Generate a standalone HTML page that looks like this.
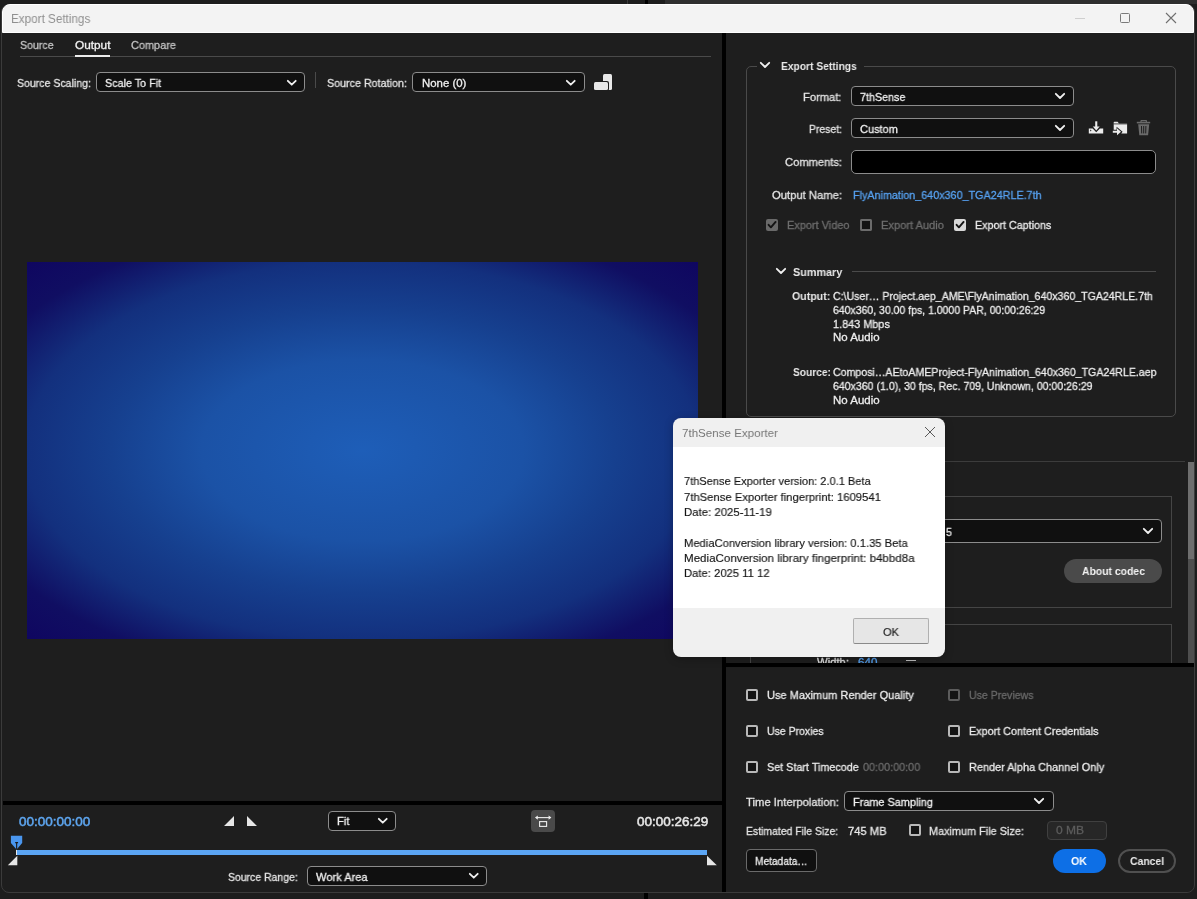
<!DOCTYPE html>
<html><head><meta charset="utf-8"><title>Export Settings</title>
<style>
html,body{margin:0;padding:0;width:1197px;height:899px;overflow:hidden;background:#1d1d1d}
body>*{position:absolute}
.t{font-family:"Liberation Sans", sans-serif;line-height:1;white-space:pre;transform-origin:0 0;will-change:transform}
svg{overflow:visible}
</style></head><body>
<div style="left:0px;top:0px;width:1197px;height:899px;background:#1d1d1d"></div>
<div style="left:665px;top:0px;width:532px;height:4px;background:#2e2e2e"></div>
<div style="left:627px;top:0px;width:1px;height:4px;background:#3a3a3a"></div>
<div style="left:645px;top:0px;width:3px;height:4px;background:#000"></div>
<div style="left:644px;top:893px;width:4px;height:6px;background:#000"></div>
<div style="left:1px;top:4px;width:1194px;height:889px;box-sizing:border-box;border:1px solid #3b3b3b;border-radius:8px;background:#1e1e1e"></div>
<div style="left:2px;top:4px;width:1192px;height:29px;box-sizing:border-box;border:1px solid #fff;border-radius:8px 8px 0 0;background:#f3f3f3"></div>
<div class="t" style="left:10.57px;top:12.88px;font-size:12.5px;font-weight:400;color:#8f8f8f;transform:scaleX(0.9359);-webkit-text-stroke:0px #8f8f8f;">Export Settings</div>
<div style="left:1075px;top:18px;width:10px;height:1px;background:#cfcfcf"></div>
<div style="left:1120px;top:13px;width:10px;height:10px;box-sizing:border-box;border:1px solid #7a7a7a;border-radius:1.5px"></div>
<svg style="left:1165px;top:12px" width="12" height="12" viewBox="0 0 12 12"><path d="M1 1 L11 11 M11 1 L1 11" stroke="#6f6f6f" stroke-width="1.1"/></svg>
<div class="t" style="left:19.79px;top:39.99px;font-size:11.3px;font-weight:400;color:#c4c4c4;transform:scaleX(0.9400);-webkit-text-stroke:0.3px #c4c4c4;">Source</div>
<div class="t" style="left:74.76px;top:39.99px;font-size:11.3px;font-weight:400;color:#f2f2f2;transform:scaleX(1.0449);-webkit-text-stroke:0.3px #f2f2f2;">Output</div>
<div class="t" style="left:130.78px;top:39.99px;font-size:11.3px;font-weight:400;color:#c4c4c4;transform:scaleX(0.9657);-webkit-text-stroke:0.3px #c4c4c4;">Compare</div>
<div style="left:20px;top:56px;width:691px;height:1px;background:#4a4a4a"></div>
<div style="left:75px;top:55px;width:35px;height:2px;background:#ececec"></div>
<div class="t" style="left:16.79px;top:77.99px;font-size:11.3px;font-weight:400;color:#e4e4e4;transform:scaleX(0.9333);-webkit-text-stroke:0.3px #e4e4e4;">Source Scaling:</div>
<div style="left:96px;top:72px;width:209px;height:20px;box-sizing:border-box;border:1px solid #8c8c8c;border-radius:4px;background:#101010"></div>
<svg style="left:286px;top:78.5px" width="11.5" height="7.5" viewBox="-1 -1 11.5 7.5"><path d="M0.8 0.8 L4.75 4.7 L8.7 0.8" fill="none" stroke="#f0f0f0" stroke-width="1.8" stroke-linecap="round" stroke-linejoin="round"/></svg>
<div class="t" style="left:105.08px;top:77.99px;font-size:11.3px;font-weight:400;color:#f0f0f0;transform:scaleX(0.9532);-webkit-text-stroke:0.3px #f0f0f0;">Scale To Fit</div>
<div style="left:315px;top:72px;width:1px;height:16px;background:#4a4a4a"></div>
<div class="t" style="left:326.79px;top:77.99px;font-size:11.3px;font-weight:400;color:#e4e4e4;transform:scaleX(0.9489);-webkit-text-stroke:0.3px #e4e4e4;">Source Rotation:</div>
<div style="left:412px;top:72px;width:173px;height:20px;box-sizing:border-box;border:1px solid #8c8c8c;border-radius:4px;background:#101010"></div>
<svg style="left:565px;top:78.5px" width="11.5" height="7.5" viewBox="-1 -1 11.5 7.5"><path d="M0.8 0.8 L4.75 4.7 L8.7 0.8" fill="none" stroke="#f0f0f0" stroke-width="1.8" stroke-linecap="round" stroke-linejoin="round"/></svg>
<div class="t" style="left:421.67px;top:77.99px;font-size:11.3px;font-weight:400;color:#f0f0f0;transform:scaleX(1.0105);-webkit-text-stroke:0.3px #f0f0f0;">None (0)</div>
<div style="left:603px;top:74px;width:9px;height:16px;background:#e8e8e8;border-radius:1.5px"></div>
<div style="left:593px;top:81px;width:16px;height:10px;background:#1e1e1e;border-radius:2px"></div>
<div style="left:594px;top:82px;width:14px;height:8px;background:#e8e8e8;border-radius:1.5px"></div>
<div style="left:27px;top:262px;width:671px;height:377px;background:radial-gradient(ellipse farthest-corner at 50% 50%, #1e5eb8 0%, #1b52a6 34%, #16408f 53%, #13307e 71%, #100e62 87%, #0f0660 100%)"></div>
<div style="left:3px;top:801px;width:719px;height:4px;background:#000"></div>
<div class="t" style="left:18.73px;top:814.95px;font-size:13px;font-weight:400;color:#5ea6f0;transform:scaleX(1.0392);-webkit-text-stroke:0.5px #5ea6f0;">00:00:00:00</div>
<svg style="left:220px;top:812px" width="40" height="18" viewBox="220 812 40 18"><path d="M224 826 L234 816 L234 826 Z M247 816 L247 826 L257 826 Z" fill="#e6e6e6"/></svg>
<div style="left:328px;top:811px;width:68px;height:20px;box-sizing:border-box;border:1px solid #8c8c8c;border-radius:4px;background:#101010"></div>
<svg style="left:376.5px;top:817.3px" width="11.5" height="7.5" viewBox="-1 -1 11.5 7.5"><path d="M0.8 0.8 L4.75 4.7 L8.7 0.8" fill="none" stroke="#f0f0f0" stroke-width="1.8" stroke-linecap="round" stroke-linejoin="round"/></svg>
<div class="t" style="left:337.28px;top:816.00px;font-size:11.3px;font-weight:400;color:#f0f0f0;transform:scaleX(0.9778);-webkit-text-stroke:0.3px #f0f0f0;">Fit</div>
<div style="left:531px;top:810px;width:24px;height:22px;background:#4a4a4a;border-radius:4px"></div>
<svg style="left:531px;top:810px" width="24" height="22" viewBox="531 810 24 22"><path d="M535.8 817.6 L550.6 817.6" stroke="#eeeeee" stroke-width="1.1"/><path d="M535 817.6 L537.8 815.4 L537.8 819.8 Z M551.4 817.6 L548.6 815.4 L548.6 819.8 Z" fill="#eeeeee"/><rect x="539.6" y="821.6" width="7" height="4.8" fill="none" stroke="#eeeeee" stroke-width="1.1"/></svg>
<div class="t" style="left:636.53px;top:814.95px;font-size:13px;font-weight:400;color:#e8e8e8;transform:scaleX(1.0377);-webkit-text-stroke:0.5px #e8e8e8;">00:00:26:29</div>
<div style="left:17px;top:850px;width:690px;height:5px;background:#5ba5f4"></div>
<div style="left:16px;top:850px;width:1.3px;height:5px;background:#eaeaea"></div>
<svg style="left:0px;top:830px" width="40" height="40" viewBox="0 830 40 40"><path d="M10.9 835.8 L22.2 835.8 L22.2 843 L16.6 849.6 L10.9 843 Z" fill="#4a96ee"/><path d="M15.2 842.6 L18.1 842.6 M16.65 842.6 L16.65 849" stroke="#1a1a1a" stroke-width="1.1"/><path d="M7.8 865.2 L17.3 855.8 L17.3 865.2 Z" fill="#e6e6e6"/></svg>
<svg style="left:700px;top:850px" width="24" height="20" viewBox="700 850 24 20"><path d="M707 855.8 L707 865.2 L716.8 865.2 Z" fill="#e6e6e6"/></svg>
<div class="t" style="left:227.79px;top:872.00px;font-size:11.3px;font-weight:400;color:#e4e4e4;transform:scaleX(0.9252);-webkit-text-stroke:0.3px #e4e4e4;">Source Range:</div>
<div style="left:307px;top:866px;width:180px;height:20px;box-sizing:border-box;border:1px solid #8c8c8c;border-radius:4px;background:#101010"></div>
<svg style="left:467.5px;top:872.3px" width="11.5" height="7.5" viewBox="-1 -1 11.5 7.5"><path d="M0.8 0.8 L4.75 4.7 L8.7 0.8" fill="none" stroke="#f0f0f0" stroke-width="1.8" stroke-linecap="round" stroke-linejoin="round"/></svg>
<div class="t" style="left:315.98px;top:871.50px;font-size:11.3px;font-weight:400;color:#f0f0f0;transform:scaleX(0.9820);-webkit-text-stroke:0.3px #f0f0f0;">Work Area</div>
<div style="left:722px;top:33px;width:4px;height:859px;background:#000"></div>
<div style="left:746px;top:65.5px;width:430px;height:351.5px;box-sizing:border-box;border:1px solid #4a4a4a;border-radius:5px"></div>
<div style="left:757px;top:63px;width:107px;height:5px;background:#1e1e1e"></div>
<svg style="left:759px;top:61.3px" width="12" height="7.8" viewBox="-1 -1 12 7.8"><path d="M0.8 0.8 L5.0 5.0 L9.2 0.8" fill="none" stroke="#f0f0f0" stroke-width="1.8" stroke-linecap="round" stroke-linejoin="round"/></svg>
<div class="t" style="left:781.20px;top:60.99px;font-size:11.3px;font-weight:700;color:#eaeaea;transform:scaleX(0.9070);-webkit-text-stroke:0px #eaeaea;">Export Settings</div>
<div class="t" style="left:803.28px;top:91.99px;font-size:11.3px;font-weight:400;color:#e4e4e4;transform:scaleX(0.9864);-webkit-text-stroke:0.3px #e4e4e4;">Format:</div>
<div style="left:851px;top:86px;width:223px;height:20px;box-sizing:border-box;border:1px solid #8c8c8c;border-radius:4px;background:#101010"></div>
<svg style="left:1054px;top:92px" width="12" height="7.8" viewBox="-1 -1 12 7.8"><path d="M0.8 0.8 L5.0 5.0 L9.2 0.8" fill="none" stroke="#f0f0f0" stroke-width="1.8" stroke-linecap="round" stroke-linejoin="round"/></svg>
<div class="t" style="left:859.69px;top:91.99px;font-size:11.3px;font-weight:400;color:#f0f0f0;transform:scaleX(0.9499);-webkit-text-stroke:0.3px #f0f0f0;">7thSense</div>
<div class="t" style="left:808.59px;top:123.99px;font-size:11.3px;font-weight:400;color:#e4e4e4;transform:scaleX(0.9228);-webkit-text-stroke:0.3px #e4e4e4;">Preset:</div>
<div style="left:851px;top:118px;width:223px;height:20px;box-sizing:border-box;border:1px solid #8c8c8c;border-radius:4px;background:#101010"></div>
<svg style="left:1054px;top:124px" width="12" height="7.8" viewBox="-1 -1 12 7.8"><path d="M0.8 0.8 L5.0 5.0 L9.2 0.8" fill="none" stroke="#f0f0f0" stroke-width="1.8" stroke-linecap="round" stroke-linejoin="round"/></svg>
<div class="t" style="left:859.78px;top:123.99px;font-size:11.3px;font-weight:400;color:#f0f0f0;transform:scaleX(0.9732);-webkit-text-stroke:0.3px #f0f0f0;">Custom</div>
<svg style="left:1086px;top:118px" width="70" height="20" viewBox="1086 118 70 20"><path d="M1096.25 121.3 L1096.25 127.5" stroke="#ececec" stroke-width="2.1"/><path d="M1092.8 126.4 L1099.7 126.4 L1096.25 130.6 Z" fill="#ececec"/><path d="M1088.8 128.5 L1092.6 128.5 L1096.25 132.2 L1099.9 128.5 L1103.2 128.5 L1103.2 133.6 L1088.8 133.6 Z" fill="#ececec"/><path d="M1090.2 129.6 L1091.6 130.5 L1090.2 131.4 Z" fill="#1e1e1e"/><path d="M1113.7 123.6 L1113.7 122.4 Q1113.7 121.7 1114.4 121.7 L1117.6 121.7 L1119 123.6 Z" fill="#e6e6e6"/><rect x="1113.7" y="123.6" width="13.4" height="1" fill="#9a9a9a"/><path d="M1113.7 124.6 L1127.1 124.6 L1127.1 133.4 L1121.2 133.4 L1122.6 131.8 L1116.6 126.8 L1116.6 129.8 L1113.7 129.8 Z" fill="#ececec"/><path d="M1112.8 130.8 L1117 130.8 L1117 128.3 L1121 131.8 L1117 135.3 L1117 132.8 L1112.8 132.8 Z" fill="#ececec"/><path d="M1140.8 122.3 L1141.2 120.6 L1146.2 120.6 L1146.6 122.3" fill="none" stroke="#6a6a6a" stroke-width="1.2"/><rect x="1136.8" y="121.8" width="13.4" height="1.6" fill="#6a6a6a"/><path d="M1138.2 124.2 L1149.2 124.2 L1148.1 135.2 L1139.3 135.2 Z" fill="#6a6a6a"/><path d="M1141.5 126 L1141.7 133.4 M1143.7 126 L1143.7 133.4 M1145.9 126 L1145.7 133.4" stroke="#1e1e1e" stroke-width="1"/></svg>
<div class="t" style="left:784.58px;top:157.00px;font-size:11.3px;font-weight:400;color:#e4e4e4;transform:scaleX(0.9884);-webkit-text-stroke:0.3px #e4e4e4;">Comments:</div>
<div style="left:851px;top:150px;width:305px;height:23.5px;box-sizing:border-box;border:1px solid #8c8c8c;border-radius:5px;background:#000"></div>
<div class="t" style="left:771.78px;top:190.00px;font-size:11.3px;font-weight:400;color:#e4e4e4;transform:scaleX(0.9939);-webkit-text-stroke:0.3px #e4e4e4;">Output Name:</div>
<div class="t" style="left:853.48px;top:190.00px;font-size:11.3px;font-weight:400;color:#56a2f2;transform:scaleX(0.9532);-webkit-text-stroke:0.3px #56a2f2;">FlyAnimation_640x360_TGA24RLE.7th</div>
<div style="left:766px;top:219px;width:12px;height:12px;border-radius:2px;background:#6a6a6a"></div>
<svg style="left:766px;top:219px" width="12" height="12" viewBox="0 0 12 12"><path d="M2.6 5.8 L4.9 8.3 L9.6 2.9" fill="none" stroke="#141414" stroke-width="1.9" stroke-linecap="round" stroke-linejoin="round"/></svg>
<div class="t" style="left:787.18px;top:220.00px;font-size:11.3px;font-weight:400;color:#6e6e6e;transform:scaleX(0.9689);-webkit-text-stroke:0.3px #6e6e6e;">Export Video</div>
<div style="left:860px;top:219px;width:12px;height:12px;box-sizing:border-box;border:2px solid #5c5c5c;border-radius:2px;background:#141414"></div>
<div style="left:860px;top:219px;width:12px;height:12px;box-sizing:border-box;border:2px solid #6c6c6c;border-radius:2px;background:#141414"></div>
<div class="t" style="left:880.78px;top:220.00px;font-size:11.3px;font-weight:400;color:#6e6e6e;transform:scaleX(0.9817);-webkit-text-stroke:0.3px #6e6e6e;">Export Audio</div>
<div style="left:954px;top:219px;width:12px;height:12px;border-radius:2px;background:#d8d8d8"></div>
<svg style="left:954px;top:219px" width="12" height="12" viewBox="0 0 12 12"><path d="M2.6 5.8 L4.9 8.3 L9.6 2.9" fill="none" stroke="#141414" stroke-width="1.9" stroke-linecap="round" stroke-linejoin="round"/></svg>
<div class="t" style="left:975.19px;top:220.00px;font-size:11.3px;font-weight:400;color:#ececec;transform:scaleX(0.9488);-webkit-text-stroke:0.3px #ececec;">Export Captions</div>
<svg style="left:775px;top:267.3px" width="12" height="7.8" viewBox="-1 -1 12 7.8"><path d="M0.8 0.8 L5.0 5.0 L9.2 0.8" fill="none" stroke="#f0f0f0" stroke-width="1.8" stroke-linecap="round" stroke-linejoin="round"/></svg>
<div class="t" style="left:792.78px;top:267.00px;font-size:11.3px;font-weight:700;color:#eaeaea;transform:scaleX(0.9566);-webkit-text-stroke:0px #eaeaea;">Summary</div>
<div style="left:852px;top:270.5px;width:304px;height:1px;background:#4a4a4a"></div>
<div class="t" style="left:792.39px;top:291.00px;font-size:11.3px;font-weight:700;color:#eaeaea;transform:scaleX(0.9379);-webkit-text-stroke:0px #eaeaea;">Output:</div>
<div class="t" style="left:832.79px;top:291.00px;font-size:11.3px;font-weight:400;color:#ededed;transform:scaleX(0.9363);-webkit-text-stroke:0.3px #ededed;">C:\User… Project.aep_AME\FlyAnimation_640x360_TGA24RLE.7th</div>
<div class="t" style="left:832.79px;top:305.00px;font-size:11.3px;font-weight:400;color:#ededed;transform:scaleX(0.9283);-webkit-text-stroke:0.3px #ededed;">640x360, 30.00 fps, 1.0000 PAR, 00:00:26:29</div>
<div class="t" style="left:832.78px;top:318.50px;font-size:11.3px;font-weight:400;color:#ededed;transform:scaleX(0.9631);-webkit-text-stroke:0.3px #ededed;">1.843 Mbps</div>
<div class="t" style="left:832.77px;top:332.00px;font-size:11.3px;font-weight:400;color:#ededed;transform:scaleX(1.0143);-webkit-text-stroke:0.3px #ededed;">No Audio</div>
<div class="t" style="left:792.80px;top:366.60px;font-size:11.3px;font-weight:700;color:#eaeaea;transform:scaleX(0.9014);-webkit-text-stroke:0px #eaeaea;">Source:</div>
<div class="t" style="left:832.79px;top:366.60px;font-size:11.3px;font-weight:400;color:#ededed;transform:scaleX(0.9383);-webkit-text-stroke:0.3px #ededed;">Composi…AEtoAMEProject-FlyAnimation_640x360_TGA24RLE.aep</div>
<div class="t" style="left:832.79px;top:380.60px;font-size:11.3px;font-weight:400;color:#ededed;transform:scaleX(0.9350);-webkit-text-stroke:0.3px #ededed;">640x360 (1.0), 30 fps, Rec. 709, Unknown, 00:00:26:29</div>
<div class="t" style="left:832.77px;top:394.60px;font-size:11.3px;font-weight:400;color:#ededed;transform:scaleX(1.0166);-webkit-text-stroke:0.3px #ededed;">No Audio</div>
<div style="left:726px;top:461px;width:459px;height:1px;background:#3c3c3c"></div>
<div style="left:750px;top:495.5px;width:421.5px;height:112px;box-sizing:border-box;border:1px solid #454545"></div>
<div style="left:760px;top:519px;width:401.5px;height:23.5px;box-sizing:border-box;border:1px solid #8c8c8c;border-radius:4px;background:#101010"></div>
<svg style="left:1142px;top:527px" width="12" height="7.8" viewBox="-1 -1 12 7.8"><path d="M0.8 0.8 L5.0 5.0 L9.2 0.8" fill="none" stroke="#f0f0f0" stroke-width="1.8" stroke-linecap="round" stroke-linejoin="round"/></svg>
<div class="t" style="left:945.79px;top:526.50px;font-size:11.3px;font-weight:400;color:#f0f0f0;transform:scaleX(0.9271);-webkit-text-stroke:0.3px #f0f0f0;">5</div>
<div style="left:1064px;top:559px;width:98px;height:24px;background:#4a4a4a;border-radius:12px"></div>
<div class="t" style="left:1081.69px;top:566.00px;font-size:11.3px;font-weight:700;color:#f2f2f2;transform:scaleX(0.9198);-webkit-text-stroke:0px #f2f2f2;">About codec</div>
<div style="left:750px;top:624px;width:421.5px;height:60px;box-sizing:border-box;border:1px solid #454545"></div>
<div class="t" style="left:817.48px;top:656.50px;font-size:11.3px;font-weight:400;color:#e4e4e4;transform:scaleX(0.9932);-webkit-text-stroke:0.3px #e4e4e4;">Width:</div>
<div class="t" style="left:857.57px;top:656.50px;font-size:11.3px;font-weight:400;color:#56a2f2;transform:scaleX(1.0248);-webkit-text-stroke:0.3px #56a2f2;">640</div>
<div style="left:906px;top:659.5px;width:10px;height:1.5px;background:#bdbdbd"></div>
<div style="left:1188px;top:462px;width:6px;height:201px;background:#4e4e4e"></div>
<div style="left:1188px;top:462px;width:6px;height:97px;background:#6e6e6e"></div>
<div style="left:722px;top:663px;width:472px;height:4px;background:#000"></div>
<div style="left:726px;top:667px;width:467px;height:225px;background:#1e1e1e;border-radius:0 0 7px 0"></div>
<div style="left:746px;top:689px;width:12px;height:12px;box-sizing:border-box;border:2px solid #b8b8b8;border-radius:2px;background:#141414"></div>
<div class="t" style="left:766.78px;top:690.20px;font-size:11.3px;font-weight:400;color:#ebebeb;transform:scaleX(0.9748);-webkit-text-stroke:0.3px #ebebeb;">Use Maximum Render Quality</div>
<div style="left:948px;top:689px;width:12px;height:12px;box-sizing:border-box;border:2px solid #5c5c5c;border-radius:2px;background:#141414"></div>
<div class="t" style="left:969.19px;top:690.20px;font-size:11.3px;font-weight:400;color:#6a6a6a;transform:scaleX(0.9331);-webkit-text-stroke:0.3px #6a6a6a;">Use Previews</div>
<div style="left:746px;top:725px;width:12px;height:12px;box-sizing:border-box;border:2px solid #b8b8b8;border-radius:2px;background:#141414"></div>
<div class="t" style="left:766.79px;top:726.20px;font-size:11.3px;font-weight:400;color:#ebebeb;transform:scaleX(0.9283);-webkit-text-stroke:0.3px #ebebeb;">Use Proxies</div>
<div style="left:948px;top:725px;width:12px;height:12px;box-sizing:border-box;border:2px solid #b8b8b8;border-radius:2px;background:#141414"></div>
<div class="t" style="left:969.18px;top:726.20px;font-size:11.3px;font-weight:400;color:#ebebeb;transform:scaleX(0.9545);-webkit-text-stroke:0.3px #ebebeb;">Export Content Credentials</div>
<div style="left:746px;top:761px;width:12px;height:12px;box-sizing:border-box;border:2px solid #b8b8b8;border-radius:2px;background:#141414"></div>
<div class="t" style="left:766.78px;top:762.20px;font-size:11.3px;font-weight:400;color:#ebebeb;transform:scaleX(0.9551);-webkit-text-stroke:0.3px #ebebeb;">Set Start Timecode</div>
<div class="t" style="left:862.78px;top:762.20px;font-size:11.3px;font-weight:400;color:#6a6a6a;transform:scaleX(0.9578);-webkit-text-stroke:0.3px #6a6a6a;">00:00:00:00</div>
<div style="left:948px;top:761px;width:12px;height:12px;box-sizing:border-box;border:2px solid #b8b8b8;border-radius:2px;background:#141414"></div>
<div class="t" style="left:969.18px;top:762.20px;font-size:11.3px;font-weight:400;color:#ebebeb;transform:scaleX(0.9658);-webkit-text-stroke:0.3px #ebebeb;">Render Alpha Channel Only</div>
<div class="t" style="left:746.47px;top:797.00px;font-size:11.3px;font-weight:400;color:#e4e4e4;transform:scaleX(0.9964);-webkit-text-stroke:0.3px #e4e4e4;">Time Interpolation:</div>
<div style="left:844.4px;top:791px;width:209.6px;height:20px;box-sizing:border-box;border:1px solid #8c8c8c;border-radius:4px;background:#101010"></div>
<svg style="left:1033px;top:797px" width="12" height="7.8" viewBox="-1 -1 12 7.8"><path d="M0.8 0.8 L5.0 5.0 L9.2 0.8" fill="none" stroke="#f0f0f0" stroke-width="1.8" stroke-linecap="round" stroke-linejoin="round"/></svg>
<div class="t" style="left:853.38px;top:797.00px;font-size:11.3px;font-weight:400;color:#f0f0f0;transform:scaleX(0.9650);-webkit-text-stroke:0.3px #f0f0f0;">Frame Sampling</div>
<div class="t" style="left:746.49px;top:826.00px;font-size:11.3px;font-weight:400;color:#e4e4e4;transform:scaleX(0.9229);-webkit-text-stroke:0.3px #e4e4e4;">Estimated File Size:</div>
<div class="t" style="left:848.38px;top:826.00px;font-size:11.3px;font-weight:400;color:#eaeaea;transform:scaleX(0.9886);-webkit-text-stroke:0.3px #eaeaea;">745 MB</div>
<div style="left:909px;top:824px;width:12px;height:12px;box-sizing:border-box;border:2px solid #b8b8b8;border-radius:2px;background:#141414"></div>
<div class="t" style="left:929.48px;top:826.00px;font-size:11.3px;font-weight:400;color:#e4e4e4;transform:scaleX(0.9625);-webkit-text-stroke:0.3px #e4e4e4;">Maximum File Size:</div>
<div style="left:1047px;top:820.5px;width:59.5px;height:19.5px;box-sizing:border-box;border:1px solid #404040;border-radius:4px;background:#272727"></div>
<div class="t" style="left:1056.36px;top:825.00px;font-size:11.3px;font-weight:400;color:#5c5c5c;transform:scaleX(1.0640);-webkit-text-stroke:0.3px #5c5c5c;">0 MB</div>
<div style="left:746.4px;top:849.3px;width:70.6px;height:23.2px;box-sizing:border-box;border:1px solid #6a6a6a;border-radius:4px;background:#101010"></div>
<div class="t" style="left:755.20px;top:856.20px;font-size:11.3px;font-weight:400;color:#ececec;transform:scaleX(0.9008);-webkit-text-stroke:0.3px #ececec;">Metadata…</div>
<div style="left:1053px;top:849px;width:53px;height:23.6px;background:#0d6fe6;border-radius:12px"></div>
<div class="t" style="left:1071.39px;top:856.20px;font-size:11.3px;font-weight:700;color:#ffffff;transform:scaleX(0.9409);-webkit-text-stroke:0px #ffffff;">OK</div>
<div style="left:1118.4px;top:849px;width:57.6px;height:23.6px;box-sizing:border-box;border:2px solid #505050;border-radius:12px"></div>
<div class="t" style="left:1129.99px;top:856.20px;font-size:11.3px;font-weight:700;color:#eaeaea;transform:scaleX(0.9213);-webkit-text-stroke:0px #eaeaea;">Cancel</div>
<div style="left:673px;top:418px;width:272px;height:239px;border-radius:8px;background:#f0f0f0;box-shadow:0 2px 8px rgba(0,0,0,0.25)"></div>
<div style="left:673px;top:447px;width:272px;height:160.5px;background:#ffffff"></div>
<div class="t" style="left:682.47px;top:426.84px;font-size:11.6px;font-weight:400;color:#777777;transform:scaleX(0.9979);-webkit-text-stroke:0px #777777;">7thSense Exporter</div>
<svg style="left:924px;top:426px" width="12" height="12" viewBox="0 0 12 12"><path d="M1 1 L11 11 M11 1 L1 11" stroke="#5a5a5a" stroke-width="1"/></svg>
<div class="t" style="left:683.78px;top:475.44px;font-size:11.6px;font-weight:400;color:#141414;transform:scaleX(0.9528);-webkit-text-stroke:0.15px #141414;">7thSense Exporter version: 2.0.1 Beta</div>
<div class="t" style="left:683.77px;top:490.74px;font-size:11.6px;font-weight:400;color:#141414;transform:scaleX(0.9729);-webkit-text-stroke:0.15px #141414;">7thSense Exporter fingerprint: 1609541</div>
<div class="t" style="left:683.77px;top:506.04px;font-size:11.6px;font-weight:400;color:#141414;transform:scaleX(0.9823);-webkit-text-stroke:0.15px #141414;">Date: 2025-11-19</div>
<div class="t" style="left:683.78px;top:536.64px;font-size:11.6px;font-weight:400;color:#141414;transform:scaleX(0.9669);-webkit-text-stroke:0.15px #141414;">MediaConversion library version: 0.1.35 Beta</div>
<div class="t" style="left:683.77px;top:551.94px;font-size:11.6px;font-weight:400;color:#141414;transform:scaleX(0.9968);-webkit-text-stroke:0.15px #141414;">MediaConversion library fingerprint: b4bbd8a</div>
<div class="t" style="left:683.77px;top:567.24px;font-size:11.6px;font-weight:400;color:#141414;transform:scaleX(0.9704);-webkit-text-stroke:0.15px #141414;">Date: 2025 11 12</div>
<div style="left:853px;top:618px;width:75.5px;height:26px;box-sizing:border-box;border:1px solid #b0b0b0;border-bottom-color:#8a8a8a;background:#e6e6e6;border-radius:2px"></div>
<div class="t" style="left:883.08px;top:625.84px;font-size:11.6px;font-weight:400;color:#1c1c1c;transform:scaleX(0.9534);-webkit-text-stroke:0.15px #1c1c1c;">OK</div>
</body></html>
